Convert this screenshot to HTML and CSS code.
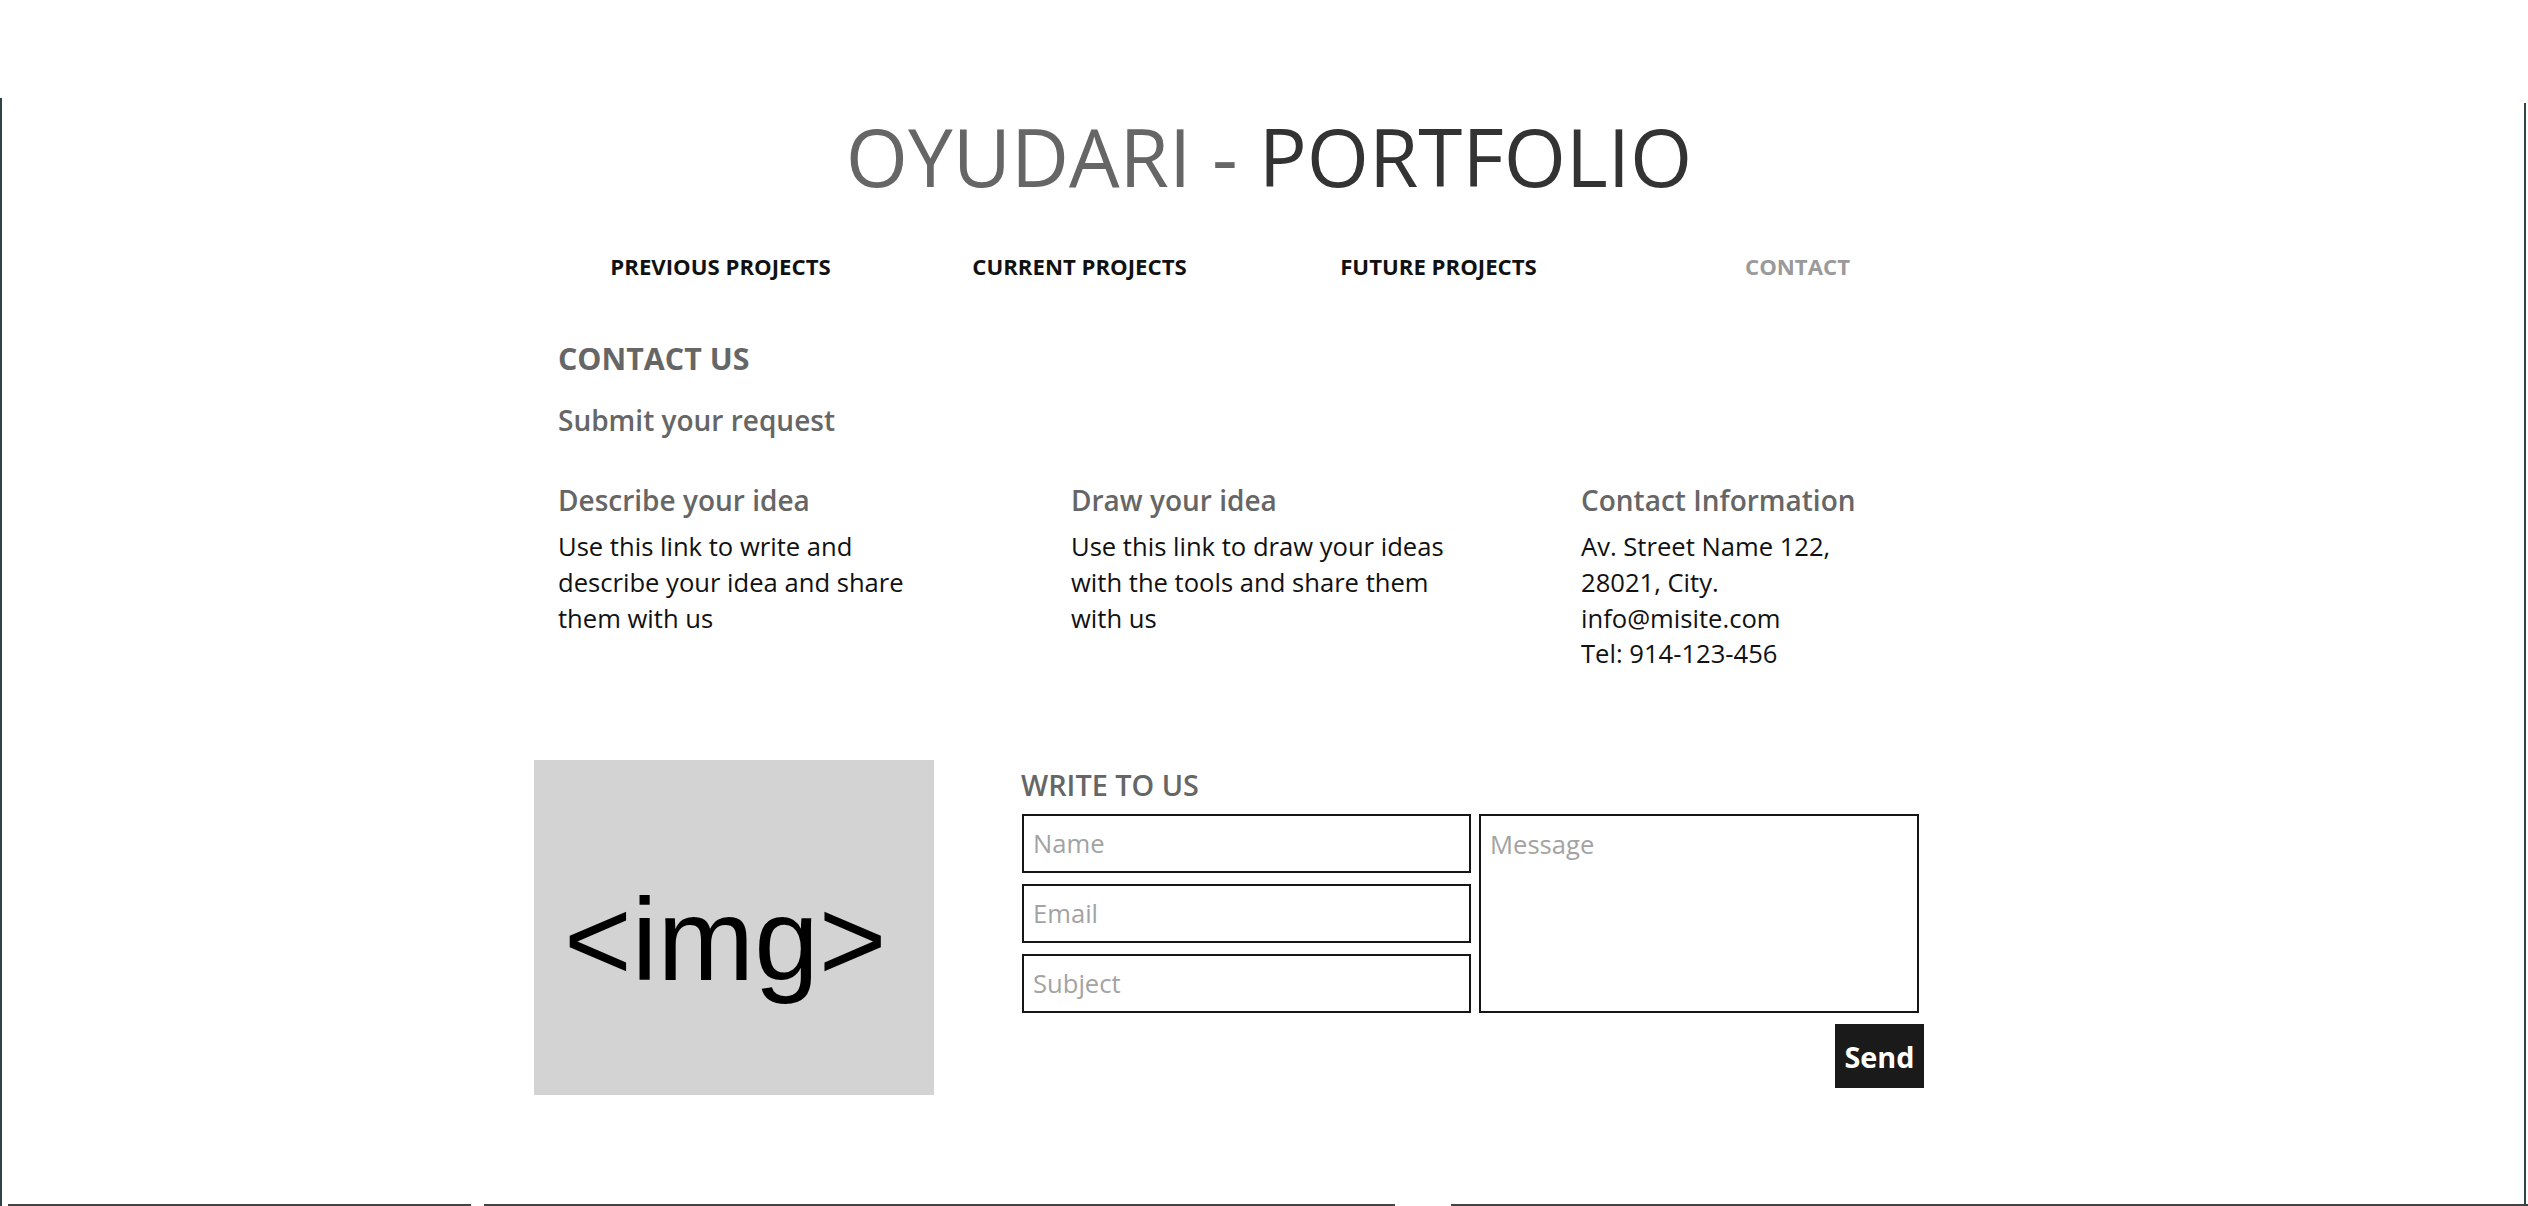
FILE: index.html
```html
<!DOCTYPE html>
<html lang="en">
<head>
<meta charset="utf-8">
<title>OYUDARI - PORTFOLIO</title>
<link rel="stylesheet" href="styles.css">
</head>
<body>
<div class="frame-lines" aria-hidden="true">
  <span class="seg seg-a"></span>
  <span class="seg seg-b"></span>
  <span class="seg seg-c"></span>
</div>
<div class="page">
  <h1 class="site-title"><span class="light">OYUDARI -</span> <span class="dark">PORTFOLIO</span></h1>
  <nav class="nav">
    <a class="nav-item">PREVIOUS PROJECTS</a>
    <a class="nav-item">CURRENT PROJECTS</a>
    <a class="nav-item">FUTURE PROJECTS</a>
    <a class="nav-item active">CONTACT</a>
  </nav>

  <section class="contact">
    <h2 class="contact-title">CONTACT US</h2>
    <h3 class="contact-sub">Submit your request</h3>
    <div class="info-grid">
      <div class="info-col">
        <h4 class="info-head">Describe your idea</h4>
        <p class="info-text">Use this link to write and describe your idea and share them with us</p>
      </div>
      <div class="info-col">
        <h4 class="info-head">Draw your idea</h4>
        <p class="info-text">Use this link to draw your ideas with the tools and share them with us</p>
      </div>
      <div class="info-col">
        <h4 class="info-head">Contact Information</h4>
        <p class="info-text">Av. Street Name 122,<br>28021, City.<br>info@misite.com<br>Tel: 914-123-456</p>
      </div>
    </div>
  </section>

  <section class="write">
    <div class="img-box">&lt;img&gt;</div>
    <form class="form">
      <h3 class="form-title">WRITE TO US</h3>
      <div class="form-grid">
        <div class="fields">
          <input class="field" type="text" placeholder="Name">
          <input class="field" type="text" placeholder="Email">
          <input class="field" type="text" placeholder="Subject">
        </div>
        <textarea class="field message" placeholder="Message"></textarea>
      </div>
      <div class="actions">
        <button class="send" type="button">Send</button>
      </div>
    </form>
  </section>
</div>
</body>
</html>
```

FILE: styles.css
```css
html, body {
  margin: 0;
  padding: 0;
  background: #ffffff;
  overflow: hidden;
}

body {
  font-family: "Open Sans", "Liberation Sans", sans-serif;
  color: #111111;
  height: 1206px;
  position: relative;
}

/* decorative frame lines around the viewport */
.frame-lines {
  position: fixed;
  inset: 0;
  pointer-events: none;
}
.frame-lines::before {
  content: "";
  position: absolute;
  left: 0;
  top: 98px;
  bottom: 0;
  width: 2px;
  background: #2e4446;
}
.frame-lines::after {
  content: "";
  position: absolute;
  right: 2px;
  top: 103px;
  bottom: 0;
  width: 2px;
  background: #2e4446;
}
.seg {
  position: absolute;
  bottom: 0;
  height: 2px;
  background: #444;
}
.seg-a { left: 8px; width: 463px; }
.seg-b { left: 484px; width: 911px; }
.seg-c { left: 1451px; right: 0; }

.page {
  width: 1460px;
  margin: 0 auto;
  padding-top: 108px;
}

.site-title {
  margin: 0;
  padding-left: 10px;
  font-size: 80px;
  line-height: 96px;
  font-weight: 400;
  text-align: center;
}
.site-title .light { color: #666666; }
.site-title .dark { color: #333333; }

.nav {
  display: grid;
  grid-template-columns: repeat(4, 359px);
  margin: 48px 0 0 7px;
}
.nav-item {
  font-size: 22.2px;
  line-height: 30px;
  font-weight: 700;
  text-align: center;
  color: #111111;
}
.nav-item.active { color: #9a9a9a; }

.contact {
  padding-left: 24px;
  margin-top: 57px;
}
.contact-title {
  margin: 0;
  font-size: 30.4px;
  line-height: 40px;
  font-weight: 700;
  color: #666666;
}
.contact-sub {
  margin: 23px 0 0;
  font-size: 28px;
  line-height: 36px;
  font-weight: 600;
  color: #666666;
}

.info-grid {
  display: grid;
  grid-template-columns: 513px 510px 1fr;
  margin-top: 44px;
}
.info-head {
  margin: 0;
  font-size: 28px;
  line-height: 36px;
  font-weight: 600;
  color: #666666;
}
.info-text {
  margin: 11px 0 0;
  max-width: 395px;
  font-size: 25.6px;
  line-height: 35.8px;
  font-weight: 400;
  color: #111111;
}

.write {
  display: flex;
  align-items: flex-start;
  margin-top: 88px;
}
.img-box {
  width: 400px;
  height: 335px;
  box-sizing: border-box;
  background: #d3d3d3;
  padding: 122px 0 0 30px;
  font-family: "Liberation Sans", Arial, sans-serif;
  font-size: 116px;
  line-height: 116px;
  color: #000000;
}

.form {
  margin-left: 87px;
  width: 903px;
  padding-top: 7px;
}
.form-title {
  margin: 0;
  font-size: 28.8px;
  line-height: 36px;
  font-weight: 600;
  color: #666666;
}
.form-grid {
  display: grid;
  grid-template-columns: 449px 440px;
  column-gap: 8px;
  margin-top: 11px;
  margin-left: 1px;
}
.fields {
  display: flex;
  flex-direction: column;
  gap: 11px;
}
.field {
  box-sizing: border-box;
  height: 59px;
  width: 100%;
  margin: 0;
  border: 2px solid #161616;
  border-radius: 0;
  padding: 0 9px;
  font-family: "Open Sans", "Liberation Sans", sans-serif;
  font-size: 25.6px;
  color: #111;
  background: #fff;
  outline: none;
}
.field::placeholder { color: #a3a3a3; }
.message {
  height: 199px;
  resize: none;
  padding: 11px 9px;
  line-height: normal;
}

.actions {
  display: flex;
  justify-content: flex-end;
  margin-top: 11px;
}
.send {
  width: 89px;
  height: 64px;
  border: 0;
  border-radius: 0;
  background: #1a1a1a;
  color: #ffffff;
  font-family: "Open Sans", "Liberation Sans", sans-serif;
  font-size: 28.8px;
  font-weight: 700;
  padding: 0;
}
```
